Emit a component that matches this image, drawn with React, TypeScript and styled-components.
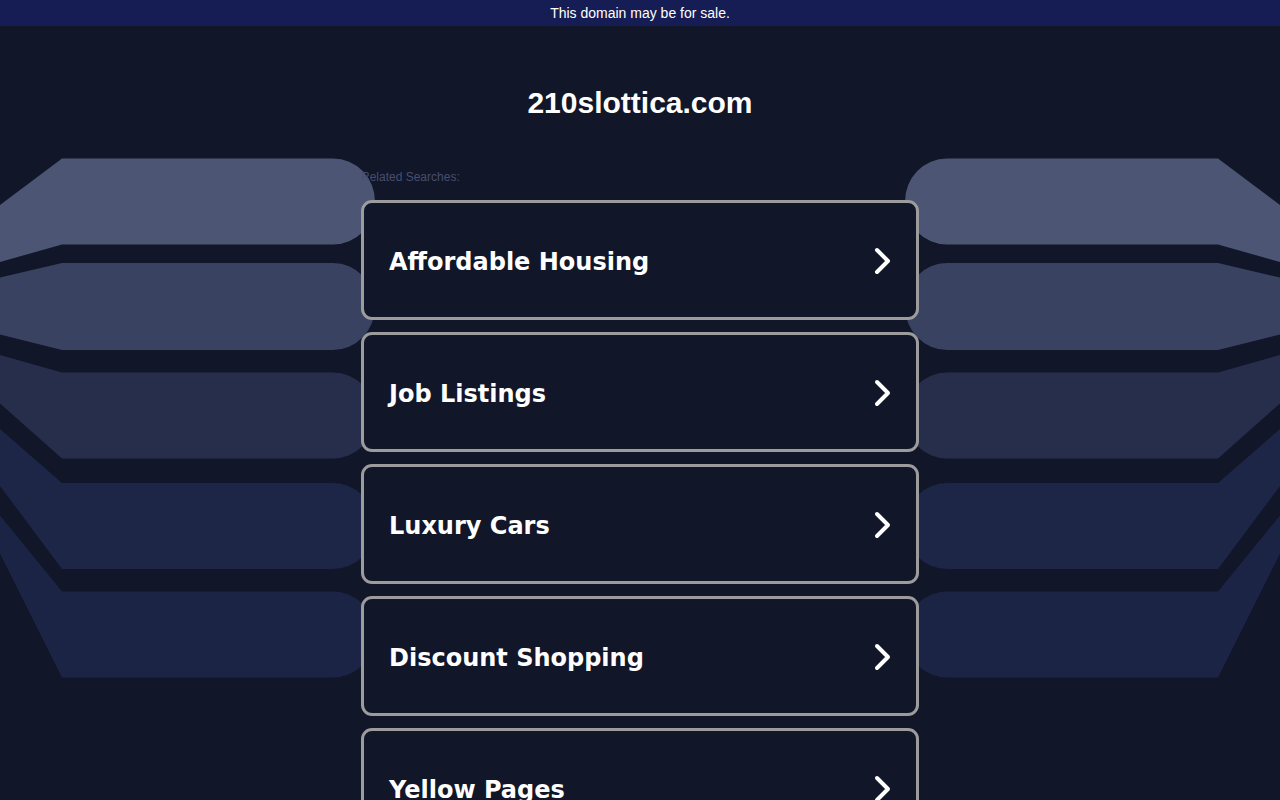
import React from 'react'
import styled, { createGlobalStyle } from 'styled-components'

const GlobalStyle = createGlobalStyle`
  html, body {
    margin: 0;
    padding: 0;
    background-color: #111629;
  }
  body {
    font-family: "Liberation Sans", Arial, sans-serif;
    overflow: hidden;
  }
`

const StyledPage = styled.div`
  position: relative;
  width: 100%;
  min-height: 800px;
  background-color: #111629;
`

const StyledBackdrop = styled.svg`
  position: absolute;
  top: 0;
  left: 0;
  width: 1280px;
  height: 800px;
  pointer-events: none;
`

const StyledTopBar = styled.div`
  position: relative;
  height: 26px;
  background-color: #161c54;
  color: #fff;
  font-size: 14px;
  line-height: 26px;
  text-align: center;
`

const StyledContent = styled.div`
  position: relative;
  width: 558px;
  margin: 0 auto;
`

const StyledTitle = styled.h1`
  margin: 0;
  padding-top: 58px;
  font-size: 30px;
  font-weight: bold;
  color: #fff;
  text-align: center;
  line-height: 38px;
  box-sizing: border-box;
  height: 128px;
`

const StyledRelated = styled.div`
  font-size: 12px;
  color: #474e6e;
  height: 46px;
  line-height: 14px;
  padding-top: 16px;
  box-sizing: border-box;
`

const StyledList = styled.div`
  display: flex;
  flex-direction: column;
  gap: 12px;
`

const StyledCard = styled.a`
  display: flex;
  align-items: center;
  justify-content: space-between;
  height: 120px;
  box-sizing: border-box;
  border: 3px solid #9c9c9c;
  border-radius: 11px;
  background-color: #111629;
  padding: 3px 24px 0 25px;
  color: #fff;
  text-decoration: none;
  font-family: "DejaVu Sans", Verdana, sans-serif;
  font-weight: bold;
  font-size: 24px;
  cursor: pointer;
`

const StyledChevron = styled.svg`
  width: 18px;
  height: 28px;
  flex: none;
  margin-top: -2px;
`

const shapes = [
  { d: 'M0,205 L62,158.5 L333,158.5 A42,43 0 0 1 333,244.5 L62,244.5 L0,262 Z', fill: '#4c5674' },
  { d: 'M0,277.5 L62,263 L333,263 A42,43.5 0 0 1 333,350 L62,350 L0,334.5 Z', fill: '#3a4262' },
  { d: 'M0,355 L62,372.5 L333,372.5 A42,43 0 0 1 333,458.5 L62,458.5 L0,403.5 Z', fill: '#262e4c' },
  { d: 'M0,429 L62,483 L333,483 A42,43 0 0 1 333,569 L62,569 L0,486 Z', fill: '#1e2647' },
  { d: 'M0,515.5 L62,591.5 L333,591.5 A42,43 0 0 1 333,677.5 L62,677.5 L0,553.5 Z', fill: '#1c2445' },
]

const searches = ['Affordable Housing', 'Job Listings', 'Luxury Cars', 'Discount Shopping', 'Yellow Pages']

const Chevron = () => (
  <StyledChevron viewBox="0 0 18 28">
    <polyline points="3,3 14,14 3,25" fill="none" stroke="#fff" strokeWidth="4" strokeLinecap="round" strokeLinejoin="round" />
  </StyledChevron>
)

const App = () => {
  return (
    <StyledPage>
      <GlobalStyle />
      <StyledBackdrop viewBox="0 0 1280 800">
        <g>
          {shapes.map((s, i) => <path key={i} d={s.d} fill={s.fill} />)}
        </g>
        <g transform="translate(1280,0) scale(-1,1)">
          {shapes.map((s, i) => <path key={i} d={s.d} fill={s.fill} />)}
        </g>
      </StyledBackdrop>

      <StyledTopBar>This domain may be for sale.</StyledTopBar>

      <StyledContent>
        <StyledTitle>210slottica.com</StyledTitle>
        <StyledRelated>Related Searches:</StyledRelated>
        <StyledList>
          {searches.map((s) => (
            <StyledCard key={s}>
              <span>{s}</span>
              <Chevron />
            </StyledCard>
          ))}
        </StyledList>
      </StyledContent>
    </StyledPage>
  )
}

export default App
